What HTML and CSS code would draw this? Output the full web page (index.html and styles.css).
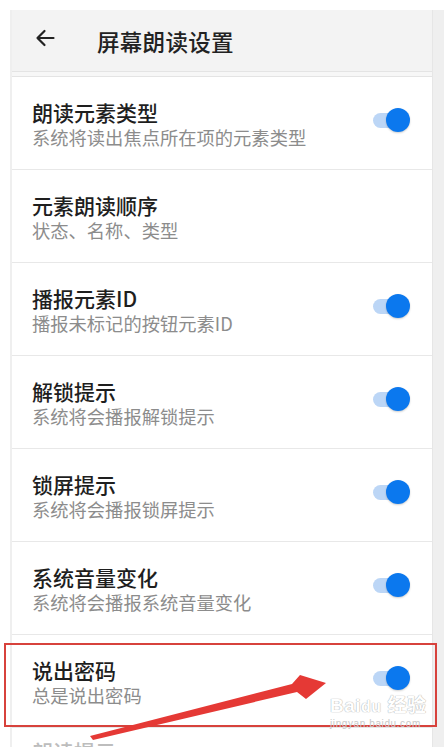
FILE: index.html
```html
<!DOCTYPE html>
<html lang="zh-CN">
<head>
<meta charset="utf-8">
<title>屏幕朗读设置</title>
<link rel="stylesheet" href="styles.css">
</head>
<body>
<div class="page">
  <div class="phone">
    <header class="bar">
      <svg class="back" width="20" height="18" viewBox="0 0 20 18" aria-hidden="true">
        <path d="M18.5 9H2.5M9.5 2L2.5 9l7 7" fill="none" stroke="#222" stroke-width="2.2" stroke-linecap="round" stroke-linejoin="round"/>
      </svg>
      <h1 class="title">屏幕朗读设置</h1>
    </header>
    <div class="gap"></div>
    <ul class="list">
      <li class="row"><div class="txt"><div class="t">朗读元素类型</div><div class="s">系统将读出焦点所在项的元素类型</div></div><span class="sw"><span class="knob"></span></span></li>
      <li class="row"><div class="txt"><div class="t">元素朗读顺序</div><div class="s">状态、名称、类型</div></div></li>
      <li class="row"><div class="txt"><div class="t">播报元素ID</div><div class="s">播报未标记的按钮元素ID</div></div><span class="sw"><span class="knob"></span></span></li>
      <li class="row"><div class="txt"><div class="t">解锁提示</div><div class="s">系统将会播报解锁提示</div></div><span class="sw"><span class="knob"></span></span></li>
      <li class="row"><div class="txt"><div class="t">锁屏提示</div><div class="s">系统将会播报锁屏提示</div></div><span class="sw"><span class="knob"></span></span></li>
      <li class="row"><div class="txt"><div class="t">系统音量变化</div><div class="s">系统将会播报系统音量变化</div></div><span class="sw"><span class="knob"></span></span></li>
      <li class="row"><div class="txt"><div class="t">说出密码</div><div class="s">总是说出密码</div></div><span class="sw"><span class="knob"></span></span></li>
      <li class="row last"><div class="txt"><div class="t">朗读提示</div></div></li>
    </ul>
  </div>
  <div class="edge"></div>

  <div class="mark"></div>
  <svg class="arrow" width="447" height="747" viewBox="0 0 447 747" aria-hidden="true">
    <polygon points="90,736 292,684 300,675 326,683 306,699 297,692 93,740" fill="#e53935"/>
  </svg>
  <div class="wm">
    <div class="wm-top">Bai<span class="paw">du</span> 经验</div>
    <div class="wm-url">jingyan.baidu.com</div>
  </div>
</div>
</body>
</html>
```
FILE: styles.css
```css
html, body {
  margin: 0;
  padding: 0;
  background: #ffffff;
}
body {
  font-family: "Noto Sans CJK SC", "Noto Sans", "Liberation Sans", sans-serif;
  color: #1f1f1f;
  overflow: hidden;
}
.page {
  position: relative;
  width: 447px;
  height: 747px;
  display: flex;
  padding: 10px 0 0 10px;
  box-sizing: border-box;
  overflow: hidden;
}
.phone {
  width: 422px;
  background: #ffffff;
  border-left: 2px solid #efefef;
  box-sizing: border-box;
}
.edge {
  width: 11px;
  background: #efefef;
  border-left: 1px solid #e6e6e6;
}
.bar {
  height: 61px;
  background: #f3f3f3;
  border-bottom: 1px solid #e4e4e4;
  display: flex;
  align-items: center;
  padding-left: 23px;
}
.back {
  margin-top: -5px;
}
.title {
  margin: 0 0 0 42px;
  font-size: 22.5px;
  font-weight: 500;
  color: #222;
  letter-spacing: 0.3px;
}
.gap {
  height: 4px;
  background: #f7f7f7;
  border-bottom: 1px solid #e4e4e4;
}
.list {
  list-style: none;
  margin: 0;
  padding: 0;
}
.row {
  height: 70px;
  border-bottom: 1px solid #e8e8e8;
  display: flex;
  align-items: flex-start;
  justify-content: space-between;
  padding: 22px 22px 0 20px;
}
.t {
  font-size: 21px;
  line-height: 27px;
  font-weight: 500;
  color: #1e1e1e;
}
.s {
  font-size: 18.3px;
  line-height: 23px;
  color: #8c8c8c;
  white-space: nowrap;
}
.last .t {
  color: #bdbdbd;
  margin-top: -12px;
}
.sw {
  position: relative;
  margin-top: 9px;
  width: 37px;
  height: 24px;
  display: flex;
  align-items: center;
}
.sw::before {
  content: "";
  width: 30px;
  height: 15px;
  border-radius: 8px;
  background: #bcd6f6;
}
.knob {
  position: absolute;
  right: 0;
  top: 0;
  width: 24px;
  height: 24px;
  border-radius: 50%;
  background: #0b78ee;
  box-shadow: 0 1px 2px rgba(0, 0, 0, 0.2);
}
.mark {
  position: absolute;
  left: 4px;
  top: 643px;
  width: 433px;
  height: 84px;
  border: 2px solid #d7423c;
  box-sizing: border-box;
}
.arrow {
  position: absolute;
  left: 0;
  top: 0;
}
.wm {
  position: absolute;
  left: 330px;
  top: 695px;
  font-family: "Liberation Sans", "Noto Sans CJK SC", sans-serif;
  color: #ffffff;
  text-shadow: 0 0 1px #b0b0b0, 0 0 1px #b0b0b0;
}
.wm-top {
  font-size: 19px;
  font-weight: bold;
  line-height: 22px;
  letter-spacing: 0.5px;
}
.paw {
  font-size: 16px;
}
.wm-url {
  font-size: 10px;
  line-height: 12px;
  color: #c8c8c8;
  text-shadow: none;
  letter-spacing: 0.6px;
}
```
